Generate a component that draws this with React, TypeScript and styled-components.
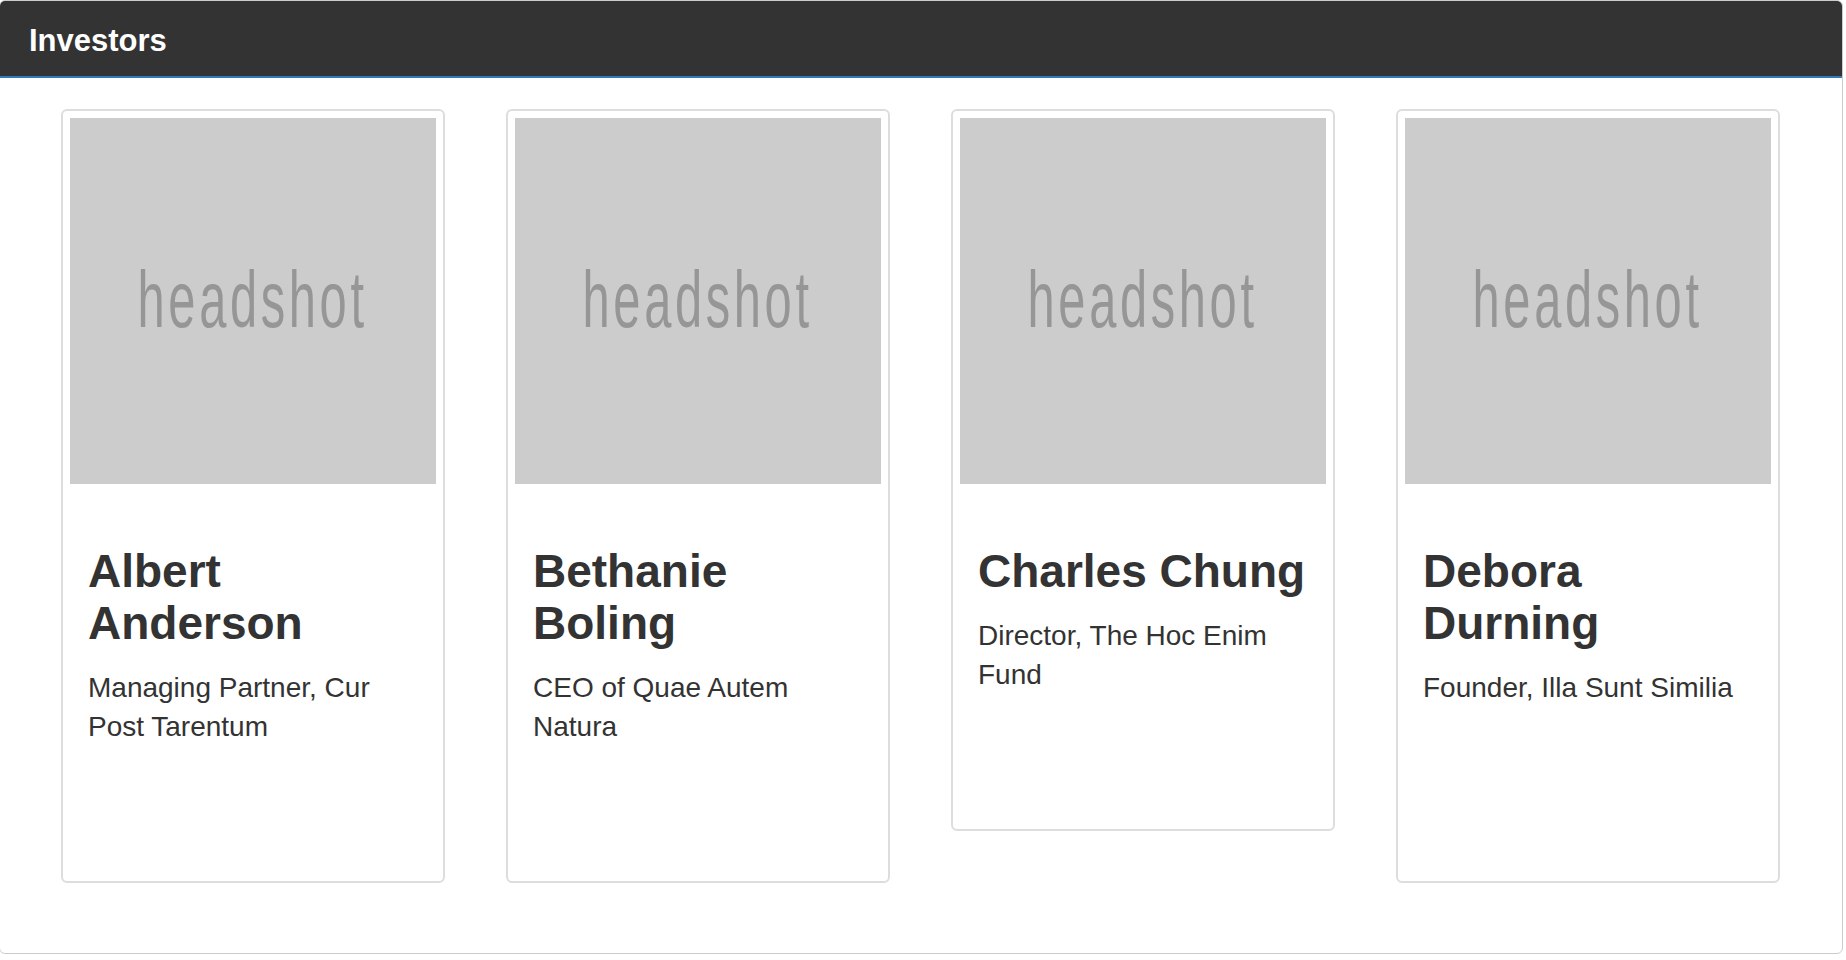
import styled, { createGlobalStyle } from 'styled-components';

interface Investor {
    id: number;
    name: string;
    title: string;
}

const investors: Investor[] = [
    { id: 1, name: 'Albert Anderson', title: 'Managing Partner, Cur Post Tarentum' },
    { id: 2, name: 'Bethanie Boling', title: 'CEO of Quae Autem Natura' },
    { id: 3, name: 'Charles Chung', title: 'Director, The Hoc Enim Fund' },
    { id: 4, name: 'Debora Durning', title: 'Founder, Illa Sunt Similia' },
];

const GlobalStyle = createGlobalStyle`
    html, body {
        margin: 0;
        padding: 0;
        background: #ffffff;
    }
    body {
        font-family: "Liberation Sans", Arial, Helvetica, sans-serif;
        color: #333333;
        overflow: hidden;
    }
`;

export default function App(): JSX.Element {
    return (
        <>
            <GlobalStyle />
            <Panel>
                <PanelHeading>
                    <PanelTitle>Investors</PanelTitle>
                </PanelHeading>
                <CardGrid>
                    {investors.map((investor) => (
                        <Thumbnail key={investor.id}>
                            <Headshot>
                                <HeadshotLabel>headshot</HeadshotLabel>
                            </Headshot>
                            <Caption>
                                <Name>{investor.name}</Name>
                                <Title>{investor.title}</Title>
                            </Caption>
                        </Thumbnail>
                    ))}
                </CardGrid>
            </Panel>
        </>
    );
}

const Panel = styled.section`
    margin: 0 3px 0 -1px;
    border: 1px solid #cccccc;
    border-radius: 6px;
    background: #ffffff;
    overflow: hidden;
`;

const PanelHeading = styled.header`
    height: 75px;
    display: flex;
    align-items: center;
    padding: 0 28px 0 29px;
    background: #333333;
    border-bottom: 2px solid #337ab7;
`;

const PanelTitle = styled.h2`
    margin: 0;
    font-size: 31px;
    font-weight: 700;
    color: #ffffff;
    line-height: 1;
    padding-top: 4px;
`;

const CardGrid = styled.div`
    display: grid;
    grid-template-columns: repeat(4, 384px);
    column-gap: 61px;
    align-items: start;
    padding: 31px 0 70px 61px;
`;

const Thumbnail = styled.article`
    box-sizing: border-box;
    width: 384px;
    padding: 7px;
    border: 2px solid #dddddd;
    border-radius: 6px;
    background: #ffffff;
`;

const Headshot = styled.div`
    height: 366px;
    background: #cccccc;
    display: flex;
    align-items: center;
    justify-content: center;
    overflow: hidden;
`;

const HeadshotLabel = styled.span`
    display: inline-block;
    font-family: "Liberation Sans", Arial, sans-serif;
    font-size: 80px;
    line-height: 1;
    letter-spacing: 6px;
    color: #969696;
    transform: scaleX(0.61);
    margin-bottom: 2px;
`;

const Caption = styled.div`
    padding: 18px 8px 18px 18px;
`;

const Name = styled.h3`
    margin: 43px 0 19px;
    font-size: 46px;
    line-height: 52px;
    font-weight: 700;
    color: #333333;
`;

const Title = styled.p`
    margin: 0 0 110px;
    min-height: 78px;
    font-size: 28px;
    line-height: 39px;
    color: #333333;
`;
